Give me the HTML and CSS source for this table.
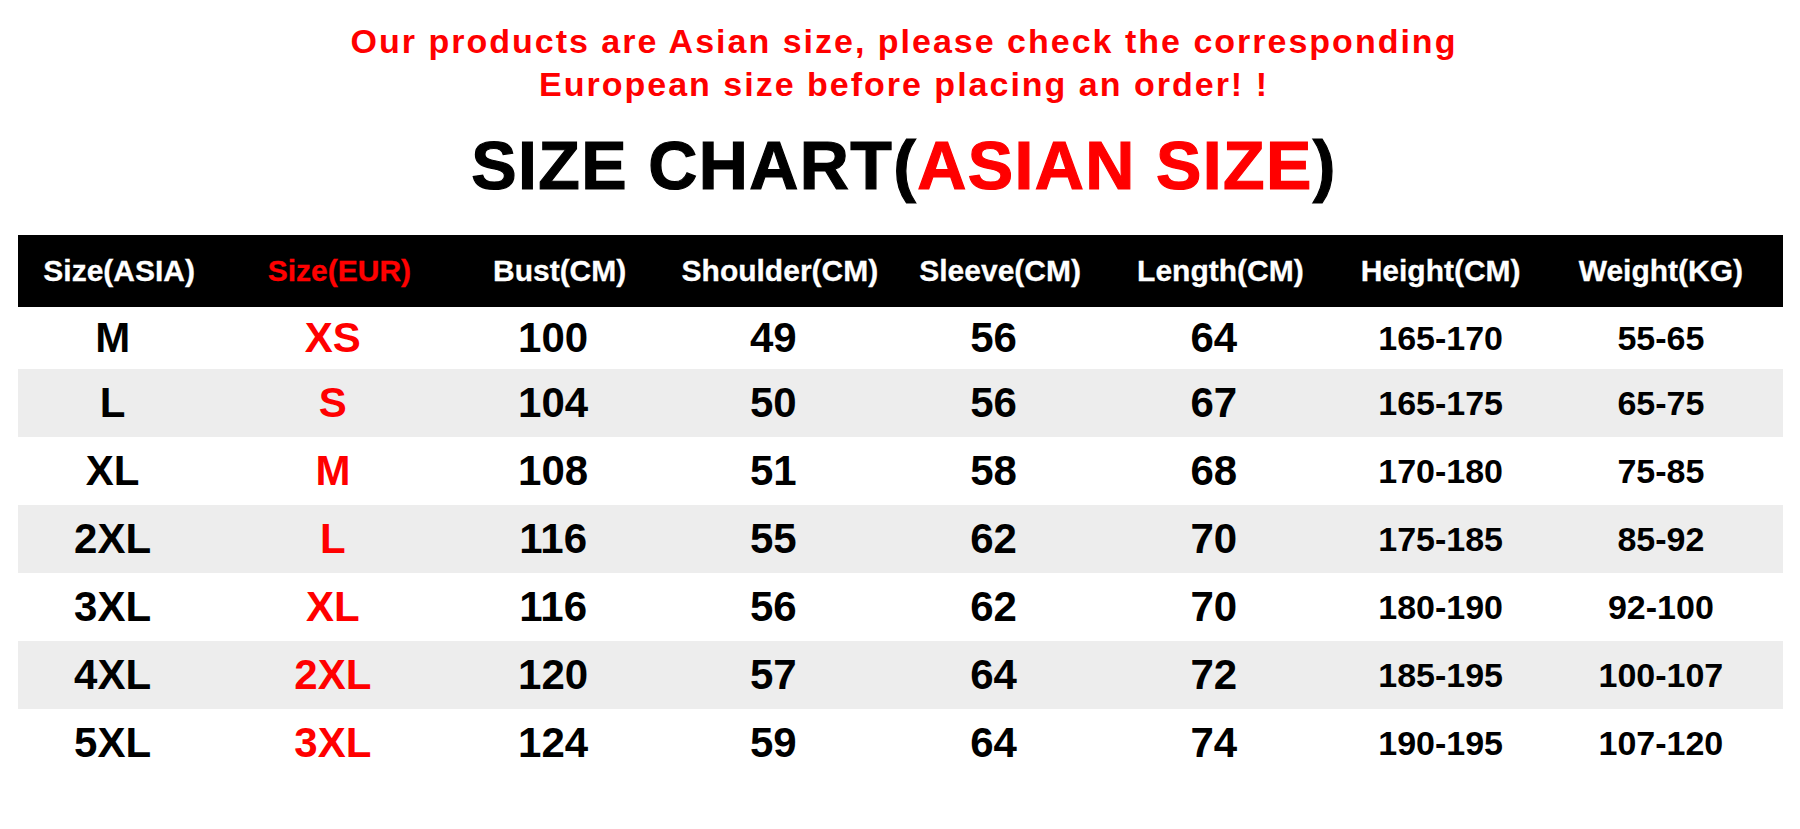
FILE: index.html
```html
<!DOCTYPE html>
<html lang="en">
<head>
<meta charset="utf-8">
<title>Size Chart</title>
<link rel="stylesheet" href="styles.css">
</head>
<body>
<div class="page">
  <header class="intro">
    <p class="notice">Our products are Asian size, please check the corresponding<br>European size before placing an order! !</p>
    <h1 class="title">SIZE CHART(<span class="red">ASIAN SIZE</span>)</h1>
  </header>

  <section class="chart">
    <div class="row head">
      <div class="cells">
        <div class="cell">Size(ASIA)</div>
        <div class="cell red">Size(EUR)</div>
        <div class="cell">Bust(CM)</div>
        <div class="cell">Shoulder(CM)</div>
        <div class="cell">Sleeve(CM)</div>
        <div class="cell">Length(CM)</div>
        <div class="cell">Height(CM)</div>
        <div class="cell">Weight(KG)</div>
      </div>
    </div>

    <div class="row first">
      <div class="cells">
        <div class="cell">M</div><div class="cell red">XS</div><div class="cell">100</div><div class="cell">49</div><div class="cell">56</div><div class="cell">64</div><div class="cell small">165-170</div><div class="cell small">55-65</div>
      </div>
    </div>
    <div class="row alt">
      <div class="cells">
        <div class="cell">L</div><div class="cell red">S</div><div class="cell">104</div><div class="cell">50</div><div class="cell">56</div><div class="cell">67</div><div class="cell small">165-175</div><div class="cell small">65-75</div>
      </div>
    </div>
    <div class="row">
      <div class="cells">
        <div class="cell">XL</div><div class="cell red">M</div><div class="cell">108</div><div class="cell">51</div><div class="cell">58</div><div class="cell">68</div><div class="cell small">170-180</div><div class="cell small">75-85</div>
      </div>
    </div>
    <div class="row alt">
      <div class="cells">
        <div class="cell">2XL</div><div class="cell red">L</div><div class="cell">116</div><div class="cell">55</div><div class="cell">62</div><div class="cell">70</div><div class="cell small">175-185</div><div class="cell small">85-92</div>
      </div>
    </div>
    <div class="row">
      <div class="cells">
        <div class="cell">3XL</div><div class="cell red">XL</div><div class="cell">116</div><div class="cell">56</div><div class="cell">62</div><div class="cell">70</div><div class="cell small">180-190</div><div class="cell small">92-100</div>
      </div>
    </div>
    <div class="row alt">
      <div class="cells">
        <div class="cell">4XL</div><div class="cell red">2XL</div><div class="cell">120</div><div class="cell">57</div><div class="cell">64</div><div class="cell">72</div><div class="cell small">185-195</div><div class="cell small">100-107</div>
      </div>
    </div>
    <div class="row">
      <div class="cells">
        <div class="cell">5XL</div><div class="cell red">3XL</div><div class="cell">124</div><div class="cell">59</div><div class="cell">64</div><div class="cell">74</div><div class="cell small">190-195</div><div class="cell small">107-120</div>
      </div>
    </div>
  </section>
</div>
</body>
</html>
```

FILE: styles.css
```css
* {
  box-sizing: border-box;
}

html, body {
  margin: 0;
  padding: 0;
  background: #ffffff;
}

body {
  font-family: "Liberation Sans", Arial, Helvetica, sans-serif;
  font-weight: bold;
  color: #000000;
}

.page {
  width: 1800px;
  height: 829px;
  overflow: hidden;
}

.intro {
  padding: 20px 0 0 8px;
  text-align: center;
}

.notice {
  margin: 0;
  font-size: 34px;
  line-height: 43px;
  letter-spacing: 2px;
  color: #ff0000;
}

.title {
  margin: 19px 0 0 0;
  font-size: 68px;
  line-height: 80px;
  letter-spacing: 1.4px;
  font-weight: bold;
  color: #000000;
  -webkit-text-stroke: 1.2px currentColor;
}

.red {
  color: #ff0000;
}

.chart {
  margin: 30px 0 0 18px;
  width: 1765px;
}

.row {
  height: 68px;
  display: flex;
  align-items: center;
  background: #ffffff;
}

.row.first {
  height: 62px;
}

.row.alt {
  background: #ededed;
}

.row.head {
  height: 72px;
  background: #000000;
  color: #ffffff;
}

.cells {
  margin-left: -9px;
  width: 1762px;
  flex: none;
  display: grid;
  grid-template-columns: repeat(8, 1fr);
  align-items: center;
}

.cell {
  text-align: center;
  font-size: 42px;
  line-height: 48px;
  white-space: nowrap;
  padding-right: 13px;
}

.cell.small {
  font-size: 34px;
  padding-right: 0;
}

.head .cell {
  font-size: 30px;
  line-height: 36px;
  padding-right: 0;
  -webkit-text-stroke: 0.3px currentColor;
}

.head .cell.red {
  color: #ff0000;
}
```
